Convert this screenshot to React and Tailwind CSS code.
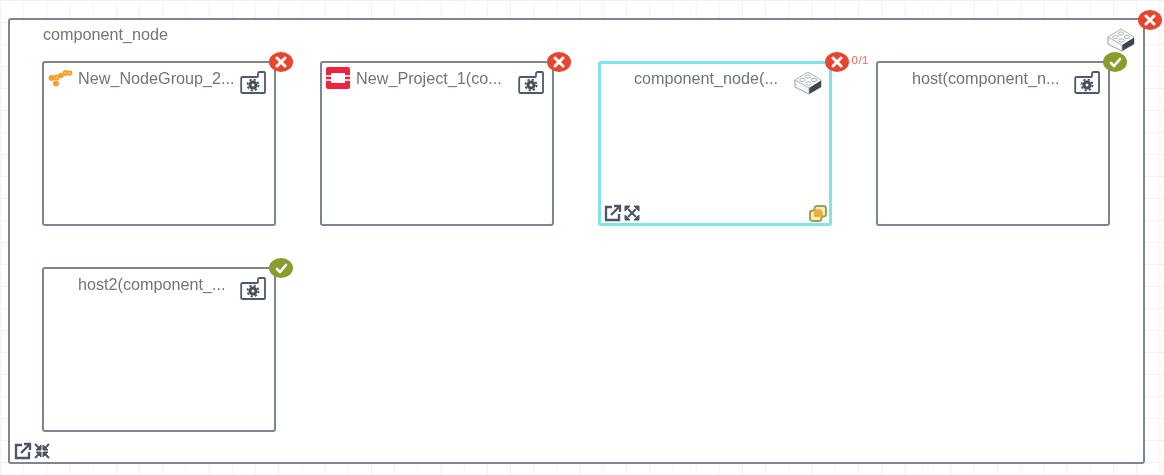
import React from "react";

// Folder with a gear, top right of most nodes
const FolderGear = () => (
  <svg width="26" height="23" viewBox="0 0 26 23" fill="none" className="block">
    <path d="M2.5 6 H17 Q18 6 18 5 V2.5 Q18 1.2 19.5 1 L23.5 0.8 Q25 0.8 25 2 V21 Q25 22 24 22 H2.5 Q1.2 22 1.2 21 V7.2 Q1.2 6 2.5 6 Z" stroke="#505967" strokeWidth="1.8" strokeLinejoin="round" />
    <circle cx="13" cy="14" r="3" stroke="#454d5a" strokeWidth="3" />
    <circle cx="13" cy="14" r="5.5" stroke="#454d5a" strokeWidth="1.8" strokeDasharray="2.2 2.12" />
  </svg>
);

const Brick = () => (
  <svg width="28" height="24" viewBox="0 0 28 24" className="block">
    <path d="M1 9 L14 1 L27 9 V16 L15 23 L1 16 Z" fill="#ffffff" stroke="#a3a9b3" strokeWidth="0.9" />
    <path d="M15 17 L27 9.5 V16 L15 23 Z" fill="#3f4650" />
    <path d="M1 9 L15 17 V23 L1 16 Z" fill="#f8f9fa" stroke="#a3a9b3" strokeWidth="0.9" />
    <ellipse cx="8.5" cy="9" rx="2.8" ry="1.6" fill="#fff" stroke="#a3a9b3" strokeWidth="0.9" />
    <ellipse cx="14" cy="5.5" rx="2.8" ry="1.6" fill="#fff" stroke="#a3a9b3" strokeWidth="0.9" />
    <ellipse cx="14.5" cy="12.5" rx="2.8" ry="1.6" fill="#fff" stroke="#a3a9b3" strokeWidth="0.9" />
    <ellipse cx="20" cy="9" rx="2.8" ry="1.6" fill="#fff" stroke="#a3a9b3" strokeWidth="0.9" />
  </svg>
);

const NodeGroupLogo = () => (
  <svg width="25" height="22" viewBox="0 0 25 22" className="block">
    <g fill="#f6a02d">
      <circle cx="3.5" cy="11" r="3" />
      <circle cx="8.5" cy="10.5" r="3" />
      <circle cx="13" cy="8.5" r="2.8" />
      <circle cx="8" cy="16.5" r="3" />
      <circle cx="17.5" cy="6" r="3" />
      <circle cx="21.5" cy="6" r="2.8" />
    </g>
    <g fill="#fbd28f">
      <circle cx="8.5" cy="10.5" r="1" />
      <circle cx="17.5" cy="6" r="1" />
      <circle cx="21.5" cy="6" r="1" />
    </g>
  </svg>
);

const OpenStackLogo = () => (
  <svg width="24" height="22" viewBox="0 0 24 22" className="block">
    <rect width="24" height="22" rx="2" fill="#f0233f" />
    <rect x="5" y="6" width="14" height="10" fill="#fff" />
    <rect y="8.2" width="5" height="1.5" fill="#fff" />
    <rect y="12.3" width="5" height="1.5" fill="#fff" />
    <rect x="19" y="8.2" width="5" height="1.5" fill="#fff" />
    <rect x="19" y="12.3" width="5" height="1.5" fill="#fff" />
  </svg>
);

const OpenLink = () => (
  <svg width="18" height="18" viewBox="0 0 18 18" fill="none" stroke="#4b5563" strokeWidth="2.3" className="block">
    <path d="M8 3 H2 V16 H15 V10" />
    <path d="M7 11 L16 2 M10 2 H16 V8" />
  </svg>
);

const Expand = () => (
  <svg width="16" height="16" viewBox="0 0 16 16" fill="none" stroke="#4b5563" strokeWidth="2" className="block">
    <path d="M4 4 L12 12 M12 4 L4 12" />
    <path d="M1 6 V1 H6 Z M10 1 H15 V6 Z M15 10 V15 H10 Z M6 15 H1 V10 Z" fill="#4b5563" strokeWidth="1" />
  </svg>
);

const Collapse = () => (
  <svg width="16" height="16" viewBox="0 0 16 16" fill="none" stroke="#4b5563" strokeWidth="2" className="block">
    <path d="M1 1 L5 5 M15 1 L11 5 M1 15 L5 11 M15 15 L11 11" />
    <path d="M2 7 H7 V2 Z M9 2 V7 H14 Z M14 9 H9 V14 Z M7 14 V9 H2 Z" fill="#4b5563" strokeWidth="1" />
  </svg>
);

const VmwareIcon = () => (
  <svg width="18" height="17" viewBox="0 0 18 17" fill="none" className="block">
    <rect x="5.5" y="1" width="11.5" height="10.5" rx="2.5" fill="#fbe9b8" stroke="#8fa552" strokeWidth="1.9" />
    <rect x="1" y="5.5" width="11.5" height="10.5" rx="2.5" fill="#fbe9b8" stroke="#8fa552" strokeWidth="1.9" />
    <rect x="5" y="5" width="8" height="7" rx="1" fill="#f7ab35" />
  </svg>
);

const ErrorBadge = () => (
  <span className="flex h-[20px] w-[24px] items-center justify-center rounded-[50%] bg-[#e8452f]">
    <svg width="12" height="12" viewBox="0 0 12 12" stroke="#fff" strokeWidth="3" strokeLinecap="round">
      <path d="M2 2 L10 10 M10 2 L2 10" />
    </svg>
  </span>
);

const OkBadge = () => (
  <span className="flex h-[20px] w-[24px] items-center justify-center rounded-[50%] bg-[#8c9c2c]">
    <svg width="13" height="11" viewBox="0 0 13 11" fill="none" stroke="#fff" strokeWidth="2.6" strokeLinecap="round" strokeLinejoin="round">
      <path d="M2 6 L5 9 L11 2" />
    </svg>
  </span>
);

const nodes = [
  { name: "New_NodeGroup_2...", logo: <NodeGroupLogo />, badge: "error" },
  { name: "New_Project_1(co...", logo: <OpenStackLogo />, badge: "error" },
  { name: "component_node(...", badge: "error", selected: true },
  { name: "host(component_n...", badge: "ok" },
  { name: "host2(component_...", badge: "ok" },
];

const NodeCard = ({ node }) => (
  <div
    className={`relative flex h-[165px] w-[234px] flex-col rounded-[3px] border-2 bg-white ${
      node.selected ? "border-[#7fe3ec] shadow-[inset_0_0_0_1px_#7fe3ec]" : "border-[#7b8596]"
    }`}
  >
    <div className="flex items-start pl-[4px] pr-[8px] pt-[4px]">
      <div className="mr-[5px] h-[22px] w-[25px] shrink-0">{node.logo}</div>
      <span className="flex-1 whitespace-nowrap text-[16.2px] leading-[22px] text-[#6f7580]">{node.name}</span>
      <div className="mt-[4px]">{node.selected ? <Brick /> : <FolderGear />}</div>
    </div>
    <div className="absolute -right-[19px] -top-[11px]">
      {node.badge === "error" ? <ErrorBadge /> : <OkBadge />}
    </div>
    {node.selected && (
      <>
        <span className="absolute -right-[39px] -top-[10px] text-[11.5px] leading-[14px] tracking-[0.5px] text-[#ee6a58]">0/1</span>
        <div className="mt-auto flex items-center justify-between pb-[2px] pl-[4px] pr-[3px]">
          <div className="flex items-center gap-[2px]">
            <OpenLink />
            <Expand />
          </div>
          <VmwareIcon />
        </div>
      </>
    )}
  </div>
);

export default function App() {
  return (
    <div className="h-[475px] w-[1164px] overflow-hidden bg-white bg-[linear-gradient(#f1f2f4_1px,transparent_1px),linear-gradient(90deg,#f1f2f4_1px,transparent_1px)] bg-[size:23.2px_22px] px-[8px] pt-[18px] font-['Liberation_Sans',Arial,sans-serif] blur-[0.4px]">
      <div className="relative flex h-[446px] w-[1137px] flex-col rounded-[3px] border-2 border-[#7b8596] bg-white">
        <div className="flex h-[41px] shrink-0 items-start justify-between pl-[33px] pr-[8px] pt-[3px]">
          <span className="text-[16.2px] leading-[22px] text-[#6f7580]">component_node</span>
          <div className="mt-[5px]">
            <Brick />
          </div>
        </div>
        <div className="absolute -right-[19px] -top-[10px]">
          <ErrorBadge />
        </div>

        <div className="ml-[32px] grid grid-cols-[repeat(4,234px)] gap-x-[44px] gap-y-[41px]">
          {nodes.map((node) => (
            <NodeCard key={node.name} node={node} />
          ))}
        </div>

        <div className="mt-auto flex items-center gap-[2px] pb-[2px] pl-[4px]">
          <OpenLink />
          <Collapse />
        </div>
      </div>
    </div>
  );
}
